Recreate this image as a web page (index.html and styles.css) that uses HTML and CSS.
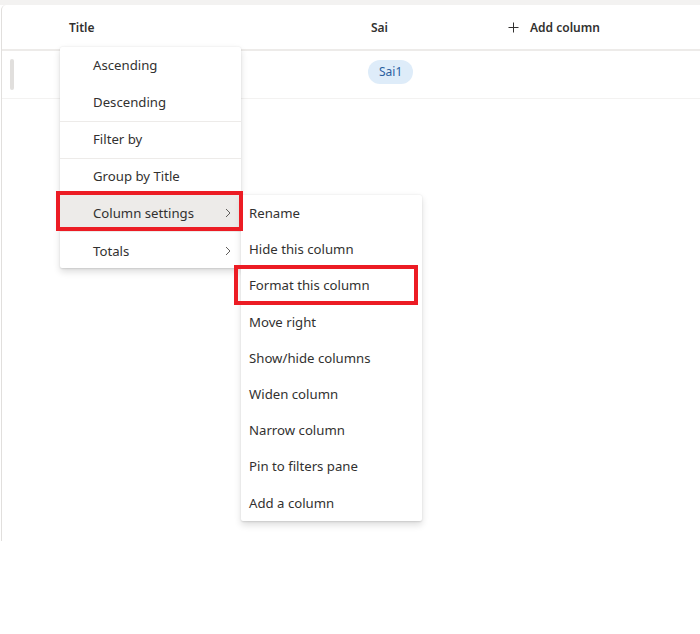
FILE: index.html
```html
<!DOCTYPE html>
<html>
<head>
<meta charset="utf-8">
<link rel="stylesheet" href="styles.css">
</head>
<body>
<div class="page">
  <div class="card">
    <div class="header">
      <div class="gutter"></div>
      <div class="col col-title">Title</div>
      <div class="col col-sai">Sai</div>
      <div class="col col-add">
        <svg class="plus" width="11" height="11" viewBox="0 0 11 11"><path d="M5.5 0.5v10M0.5 5.5h10" stroke="#323130" stroke-width="1" fill="none"/></svg>
        <span>Add column</span>
      </div>
    </div>
    <div class="row">
      <div class="gutter"><div class="thumb"></div></div>
      <div class="col col-title"></div>
      <div class="col col-sai"><span class="pill">Sai1</span></div>
    </div>
  </div>

  <div class="menu menu-main">
    <div class="item">Ascending</div>
    <div class="item">Descending</div>
    <div class="item divided">Filter by</div>
    <div class="item divided">Group by Title</div>
    <div class="item active">Column settings
      <svg class="chev" width="6" height="10" viewBox="0 0 6 10"><path d="M1 1l4 4-4 4" stroke="#605e5c" stroke-width="1" fill="none"/></svg>
    </div>
    <div class="item last">Totals
      <svg class="chev" width="6" height="10" viewBox="0 0 6 10"><path d="M1 1l4 4-4 4" stroke="#605e5c" stroke-width="1" fill="none"/></svg>
    </div>
  </div>

  <div class="menu menu-sub">
    <div class="sitem">Rename</div>
    <div class="sitem">Hide this column</div>
    <div class="sitem">Format this column</div>
    <div class="sitem">Move right</div>
    <div class="sitem">Show/hide columns</div>
    <div class="sitem">Widen column</div>
    <div class="sitem">Narrow column</div>
    <div class="sitem">Pin to filters pane</div>
    <div class="sitem">Add a column</div>
  </div>

  <div class="mark mark-1"></div>
  <div class="mark mark-2"></div>
</div>
</body>
</html>
```

FILE: styles.css
```css
* { box-sizing: border-box; }
html, body { margin: 0; padding: 0; background: #ffffff; }
body {
  font-family: "Noto Sans", "Open Sans", "Liberation Sans", sans-serif;
  color: #323130;
  width: 700px;
  height: 634px;
  overflow: hidden;
}
.page {
  position: relative;
  width: 700px;
  height: 634px;
  padding-top: 5px;
  background: linear-gradient(#f3f2f1 0 5px, #ffffff 5px);
}
.card {
  height: 536px;
  margin-left: 1px;
  background: #ffffff;
  border-left: 1px solid #e1dfdd;
  border-top-left-radius: 5px;
}
.header {
  display: flex;
  align-items: center;
  height: 46px;
  border-bottom: 2px solid #edebe9;
  font-size: 12px;
  font-weight: 600;
}
.gutter { width: 67px; flex: none; align-self: stretch; display: flex; align-items: center; }
.col-title { width: 302px; flex: none; }
.col-sai { width: 137px; flex: none; }
.col-add { display: flex; align-items: center; gap: 11px; }
.plus { display: block; }
.row {
  display: flex;
  align-items: center;
  height: 48px;
  border-bottom: 1px solid #f3f2f1;
}
.thumb {
  width: 4px;
  height: 31px;
  margin-left: 8px;
  border-radius: 2px;
  background: #e1dfdd;
}
.row .col-sai { margin-left: -3px; margin-top: -6px; }
.pill {
  display: inline-block;
  height: 24px;
  line-height: 24px;
  padding: 0 11px;
  border-radius: 12px;
  background: #deecf9;
  color: #2b5fa0;
  font-size: 12px;
}
.menu {
  position: absolute;
  background: #ffffff;
  width: 181px;
  box-shadow: 0 3.2px 7.2px rgba(0,0,0,0.132), 0 0.6px 1.8px rgba(0,0,0,0.108);
  border-radius: 2px;
  font-size: 13.2px;
}
.menu-main { left: 60px; top: 47px; }
.item {
  position: relative;
  height: 37px;
  line-height: 36px;
  padding-left: 33px;
  white-space: nowrap;
}
.item.divided { border-top: 1px solid #edebe9; line-height: 35px; }
.item.active { background: #edebe9; line-height: 37px; }
.item.last { height: 36px; line-height: 38px; }
.chev { position: absolute; right: 10px; top: 13px; }
.item.last .chev { top: 14px; }
.menu-sub { left: 241px; top: 195px; }
.sitem {
  height: 36.2px;
  line-height: 36px;
  padding-left: 8px;
  white-space: nowrap;
}
.mark {
  position: absolute;
  border: 4px solid #ec1c24;
  pointer-events: none;
}
.mark-1 { left: 56px; top: 191px; width: 187px; height: 40px; }
.mark-2 { left: 234px; top: 265px; width: 184px; height: 40px; }
```
